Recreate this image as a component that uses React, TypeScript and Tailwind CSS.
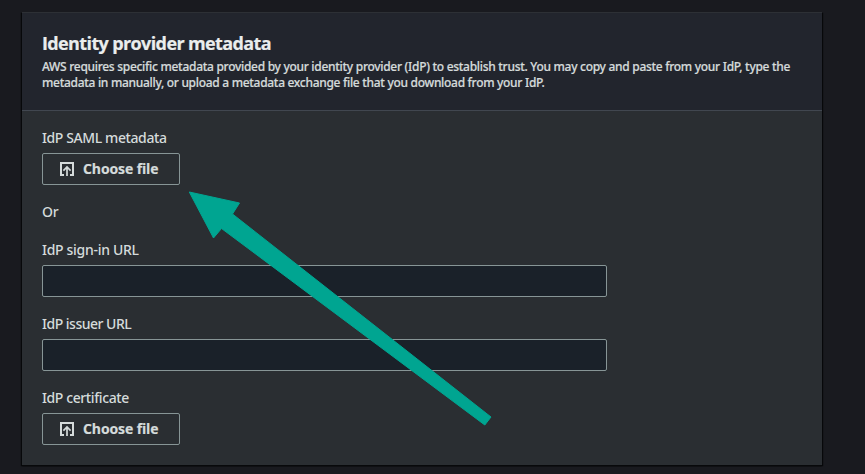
import React from 'react';

function UploadIcon() {
  return (
    <svg width="14" height="14" viewBox="0 0 14 14" fill="none" stroke="#d5dbdb" strokeWidth="2" className="shrink-0">
      <path d="M4 13H1V1h12v12h-3" />
      <path d="M7 14V5.2M3.4 8.6L7 5l3.6 3.6" strokeWidth="1.7" />
    </svg>
  );
}

function FileButton() {
  return (
    <button className="flex h-8 w-[138px] items-center gap-[9px] rounded-[2px] border border-[#879596] pl-[17px] text-[14px] leading-none font-bold text-[#d5dbdb]">
      <UploadIcon />
      <span className="whitespace-nowrap tracking-[-0.1px] [-webkit-text-stroke:0.2px_#d5dbdb]">Choose file</span>
    </button>
  );
}

function Label({ children, className = '' }: { children: React.ReactNode; className?: string }) {
  return <div className={`h-[22px] w-fit whitespace-nowrap font-['Noto_Sans','Open_Sans',sans-serif] text-[14px] leading-[22px] font-medium text-[#d5dbdb] ${className}`}>{children}</div>;
}

function TextInput() {
  return <input className="block h-8 w-[565px] rounded-[2px] border border-[#879596] bg-[#1a2129] px-2 text-[#d5dbdb] outline-none" />;
}

export default function App() {
  return (
    <div className="relative h-[474px] w-[865px] overflow-hidden bg-[#191a1f] pt-3 pl-[22px] font-['Open_Sans','Noto_Sans',sans-serif]">
      <section className="h-[453px] w-[800px] border-t border-[#2d3035] bg-[#2a2e32] shadow-[0_1px_1px_0_#08090b,1px_1px_1px_0_#08090b,-1px_1px_1px_0_#08090b]">
        <header className="h-[98px] border-b border-[#414750] bg-[#22252d] pt-[19px] pl-5">
          <h2 className="w-fit whitespace-nowrap text-[18px] leading-[22px] font-bold tracking-[-0.62px] text-[#eaeded] [-webkit-text-stroke:0.2px_#eaeded]">Identity provider metadata</h2>
          <p className="mt-[5px] text-[12px] leading-4 font-medium text-[#d5dbdb] [-webkit-text-stroke:0.2px_#d5dbdb] font-['Noto_Sans','Open_Sans',sans-serif]">
            <span className="block w-fit whitespace-nowrap tracking-[-0.29px]">AWS requires specific metadata provided by your identity provider (IdP) to establish trust. You may copy and paste from your IdP, type the</span>
            <span className="block w-fit whitespace-nowrap tracking-[-0.3px]">metadata in manually, or upload a metadata exchange file that you download from your IdP.</span>
          </p>
        </header>
        <div className="flex flex-col items-start pt-4 pl-5">
          <Label className="tracking-[-0.4px]">IdP SAML metadata</Label>
          <div className="mt-1"><FileButton /></div>
          <Label className="mt-4 tracking-[-0.3px]">Or</Label>
          <Label className="mt-4 tracking-[-0.3px]">IdP sign-in URL</Label>
          <div className="mt-1"><TextInput /></div>
          <Label className="mt-4 tracking-[-0.5px]">IdP issuer URL</Label>
          <div className="mt-1"><TextInput /></div>
          <Label className="mt-4 tracking-[-0.4px]">IdP certificate</Label>
          <div className="mt-1"><FileButton /></div>
        </div>
      </section>
      <svg className="pointer-events-none absolute top-0 left-0" width="865" height="474" viewBox="0 0 865 474">
        <path d="M189.3 192L239.5 203L232.5 214L491 417L484.8 425L221.5 228.5L213.5 238Z" fill="#00a591" stroke="#00a591" strokeWidth="1" strokeLinejoin="round" />
      </svg>
    </div>
  );
}
